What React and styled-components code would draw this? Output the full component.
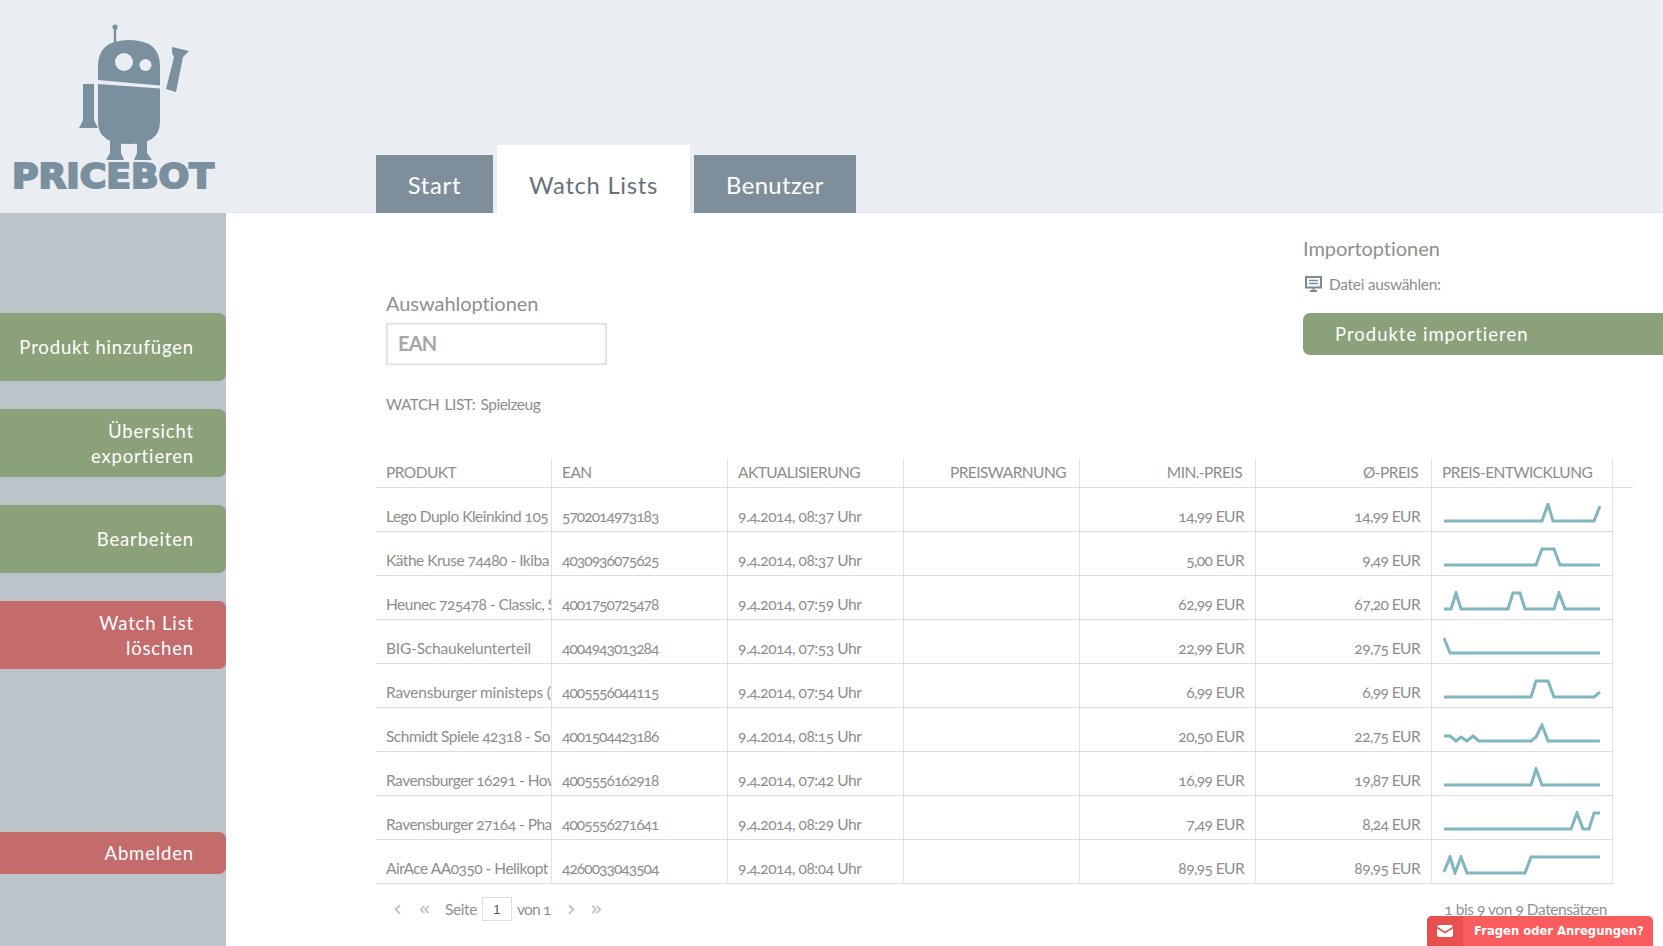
import React from 'react';
import styled, { createGlobalStyle } from 'styled-components';
import { ChevronLeft, ChevronRight, ChevronsLeft, ChevronsRight } from 'lucide-react';

const GlobalStyle = createGlobalStyle`
  html, body { margin: 0; padding: 0; background: #fff; }
  body { font-family: Lato, "Open Sans", sans-serif; color: #8f8c8c; overflow: hidden; }
`;

const Page = styled.div`
  position: relative;
  width: 1663px;
  height: 946px;
  overflow: hidden;
  display: flex;
  flex-direction: column;
`;
const Header = styled.header`
  height: 213px;
  flex: none;
  background: #eaeef2;
  display: flex;
  align-items: flex-end;
`;
const Logo = styled.svg`
  width: 226px;
  height: 213px;
  flex: none;
`;
const Tabs = styled.nav`
  display: flex;
  align-items: flex-end;
  gap: 4px;
  margin-left: 150px;
`;
const Tab = styled.a`
  width: ${p => p.$w}px;
  height: ${p => (p.$active ? 68 : 58)}px;
  box-sizing: border-box;
  display: flex;
  align-items: center;
  justify-content: center;
  padding-top: ${p => (p.$active ? 11 : 1)}px;
  background: ${p => (p.$active ? '#fff' : '#7f8e9b')};
  color: ${p => (p.$active ? '#66727c' : '#fff')};
  font-size: 23.8px;
  letter-spacing: ${p => p.$track || 0.7}px;
`;
const Body = styled.div`
  flex: 1;
  display: flex;
  min-height: 0;
`;
const Sidebar = styled.aside`
  width: 226px;
  flex: none;
  background: #bcc4ca;
  padding-top: 100px;
  box-sizing: border-box;
  display: flex;
  flex-direction: column;
  gap: 28px;
`;
const SideButton = styled.a`
  height: ${p => (p.$short ? 42 : 68)}px;
  margin-top: ${p => (p.$short ? 135 : 0)}px;
  padding: ${p => (p.$two ? 2 : 0)}px 32px 0 0;
  box-sizing: border-box;
  display: flex;
  align-items: center;
  justify-content: flex-end;
  text-align: right;
  border-radius: 0 7px 7px 0;
  background: ${p => (p.$red ? '#c46c6c' : '#8ba17a')};
  color: #fff;
  font-size: 18.5px;
  line-height: 25px;
  letter-spacing: 0.85px;
`;
const Main = styled.main`
  flex: 1;
  padding-left: 150px;
  min-width: 0;
`;
const TopRow = styled.div`
  height: 246px;
  display: flex;
  justify-content: space-between;
`;
const Options = styled.section`
  padding: 78px 0 0 10px;
`;
const Imports = styled.section`
  width: 360px;
  padding-top: 23px;
`;
const Heading = styled.h3`
  margin: 0;
  font-size: 20px;
  line-height: 24px;
  font-weight: 400;
  letter-spacing: -0.05px;
  color: #918e8e;
`;
const SearchInput = styled.input`
  display: block;
  width: 221px;
  height: 42px;
  margin-top: 8px;
  padding: 0 11px 2px;
  box-sizing: border-box;
  border: 1px solid #dedede;
  box-shadow: inset 0 0 3px #cfcfcf;
  font-family: Lato, sans-serif;
  font-size: 20px;
  font-weight: 700;
  letter-spacing: -0.8px;
  color: #a9a5a5;
  outline: none;
  &::placeholder { color: #a9a5a5; opacity: 1; }
`;
const ListName = styled.p`
  margin: 29px 0 0;
  font-size: 15.5px;
  line-height: 20px;
  letter-spacing: -0.5px;
  word-spacing: 2px;
`;
const FileRow = styled.div`
  display: flex;
  align-items: center;
  gap: 7px;
  margin-top: 14px;
  padding-left: 2px;
  font-size: 15.5px;
  line-height: 20px;
  letter-spacing: -0.3px;
`;
const ImportButton = styled.a`
  display: flex;
  align-items: center;
  height: 42px;
  margin-top: 19px;
  padding-left: 32px;
  border-radius: 7px 0 0 7px;
  background: #8ba17a;
  color: #fff;
  font-size: 18.5px;
  letter-spacing: 1px;
`;
const Table = styled.table`
  width: 1255px;
  table-layout: fixed;
  border-collapse: separate;
  border-spacing: 0;
`;
const Th = styled.th`
  width: ${p => p.$w || 176}px;
  height: 29px;
  padding: 0 ${p => (p.$right ? 13 : 10)}px 2px 10px;
  box-sizing: border-box;
  border-bottom: 1px solid #dcdcdc;
  border-right: ${p => (p.$spacer ? 'none' : '1px solid #e2e2e2')};
  font-size: 15.5px;
  font-weight: 400;
  letter-spacing: -0.55px;
  text-align: ${p => (p.$right ? 'right' : 'left')};
  white-space: nowrap;
  color: #8f8c8c;
  vertical-align: middle;
`;
const Td = styled.td`
  height: 44px;
  padding: 0 ${p => (p.$right ? 11 : p.$clip ? 0 : 10)}px 5px 10px;
  box-sizing: border-box;
  border-bottom: 1px solid #dcdcdc;
  border-right: 1px solid #e2e2e2;
  font-size: 15.5px;
  line-height: 20px;
  letter-spacing: ${p => p.$track || -0.45}px;
  text-align: ${p => (p.$right ? 'right' : 'left')};
  white-space: nowrap;
  overflow: hidden;
  vertical-align: bottom;
  font-feature-settings: "onum";
`;
const SparkCell = styled.td`
  height: 44px;
  padding: 0 0 8px 11px;
  box-sizing: border-box;
  border-bottom: 1px solid #dcdcdc;
  border-right: 1px solid #e2e2e2;
  vertical-align: bottom;
`;
const Spark = styled.svg`
  display: block;
  width: 158px;
  height: 20px;
  fill: none;
  stroke: #80b6bf;
  stroke-width: 3;
`;
const Footer = styled.div`
  display: flex;
  align-items: center;
  justify-content: space-between;
  height: 50px;
  padding-right: 56px;
`;
const Pager = styled.div`
  display: flex;
  align-items: center;
  padding-left: 14px;
  font-size: 15.5px;
  color: #939090;
`;
const PagerIcon = styled.span`
  display: flex;
  width: ${p => p.$w}px;
  color: #c0c6cb;
`;
const PageInput = styled.input`
  width: 30px;
  height: 24px;
  margin: 0 5px;
  padding: 0;
  box-sizing: border-box;
  border: 1px solid #dedede;
  text-align: center;
  font-family: "Liberation Sans", sans-serif;
  font-size: 13px;
  color: #555;
`;
const PagerText = styled.span`
  margin-right: ${p => p.$gap || 0}px;
  letter-spacing: ${p => p.$track || -0.4}px;
  font-feature-settings: "onum";
`;
const Count = styled.div`
  font-size: 15.5px;
  letter-spacing: -0.45px;
  font-feature-settings: "onum";
  color: #939090;
`;
const Feedback = styled.a`
  position: absolute;
  left: 1427px;
  bottom: 0;
  width: 226px;
  height: 30px;
  display: flex;
  border-radius: 5px 5px 0 0;
  overflow: hidden;
  background: #f85c5c;
  color: #fff;
  font-family: "DejaVu Sans", sans-serif;
  font-size: 11.6px;
  font-weight: 700;
`;
const FeedbackIcon = styled.span`
  width: 36px;
  background: #e85050;
  display: flex;
  align-items: center;
  justify-content: center;
`;
const FeedbackLabel = styled.span`
  padding-left: 11px;
  line-height: 31px;
  white-space: nowrap;
`;

const rows = [
  ['Lego Duplo Kleinkind 105', '5702014973183', '9.4.2014, 08:37 Uhr', '14,99 EUR', '14,99 EUR', '0,18 98,18 104,1 109,18 150,18 156,3'],
  ['Käthe Kruse 74480 - Ikiba', '4030936075625', '9.4.2014, 08:37 Uhr', '5,00 EUR', '9,49 EUR', '0,18 92,18 98,2 110,2 116,18 156,18'],
  ['Heunec 725478 - Classic, S', '4001750725478', '9.4.2014, 07:59 Uhr', '62,99 EUR', '67,20 EUR', '0,18 7,18 12,2 17,18 64,18 69,2 76,2 81,18 110,18 115,2 121,18 156,18'],
  ['BIG-Schaukelunterteil', '4004943013284', '9.4.2014, 07:53 Uhr', '22,99 EUR', '29,75 EUR', '0,3 6,18 156,18'],
  ['Ravensburger ministeps (', '4005556044115', '9.4.2014, 07:54 Uhr', '6,99 EUR', '6,99 EUR', '0,18 87,18 92,2 104,2 110,18 150,18 156,13'],
  ['Schmidt Spiele 42318 - So', '4001504423186', '9.4.2014, 08:15 Uhr', '20,50 EUR', '22,75 EUR', '0,13 6,13 12,18 17,14 23,18 29,13 35,18 87,18 92,14 98,2 104,18 156,18'],
  ['Ravensburger 16291 - How', '4005556162918', '9.4.2014, 07:42 Uhr', '16,99 EUR', '19,87 EUR', '0,18 87,18 92,2 98,18 156,18'],
  ['Ravensburger 27164 - Pha', '4005556271641', '9.4.2014, 08:29 Uhr', '7,49 EUR', '8,24 EUR', '0,18 127,18 133,2 139,18 145,18 150,2 156,2'],
  ['AirAce AA0350 - Helikopt', '4260033043504', '9.4.2014, 08:04 Uhr', '89,95 EUR', '89,95 EUR', '0,17 6,2 11,18 17,2 23,18 81,18 87,2 156,2'],
];

// names with figures run wider in Lato than in the original font
const nameTrack = name => (/\d/.test(name) ? -0.5 : -0.2);

const RobotLogo = () => (
  <Logo viewBox="0 0 226 213">
    <g fill="#7a909e">
      <circle cx="115" cy="27" r="2.6" />
      <rect x="113.8" y="27" width="2.4" height="17" />
      <path d="M98 80V66Q98 40 129 40Q160 40 160 66V85.500Z" />
      <path d="M98 84L160 88.500V122Q160 144 129 144Q98 144 98 122Z" />
      <path d="M110 140H121V153L124 160H106L110 153Z" />
      <path d="M137 140H147V153L152 160H134L137 153Z" />
      <path d="M83 84H94V120L98 128H79L83 120Z" />
      <path d="M172 47L189 51L183 57L176 92L166 89L174 57L172 53Z" />
      <text x="12" y="188" fontFamily="DejaVu Sans, sans-serif" fontWeight="700" fontSize="33" textLength="202" lengthAdjust="spacingAndGlyphs" stroke="#7a909e" strokeWidth="2">PRICEBOT</text>
    </g>
    <circle cx="124" cy="62" r="9" fill="#eaeef2" />
    <circle cx="145.500" cy="65" r="6" fill="#eaeef2" />
  </Logo>
);

const FileIcon = () => (
  <svg width="17" height="16" viewBox="0 0 17 16" fill="none" stroke="#7a8a96" strokeWidth="2">
    <rect x="1" y="1" width="15" height="10.500" />
    <path d="M4 4.500H13M4 7.500H13" strokeWidth="1.500" />
    <path d="M5 15H12M8.500 12V15" />
  </svg>
);

const MailIcon = () => (
  <svg width="16" height="12" viewBox="0 0 16 12" fill="#fff">
    <path d="M1.500 0H14.500L16 1.500L8 6.500L0 1.500Z" />
    <path d="M0 3.500L8 8.500L16 3.500V10.500L14.500 12H1.500L0 10.500Z" />
  </svg>
);

const App = () => (
  <Page>
    <GlobalStyle />
    <Header>
      <RobotLogo />
      <Tabs>
        <Tab $w={117}>Start</Tab>
        <Tab $w={193} $active>Watch Lists</Tab>
        <Tab $w={162} $track={0.4}>Benutzer</Tab>
      </Tabs>
    </Header>
    <Body>
      <Sidebar>
        <SideButton>Produkt hinzufügen</SideButton>
        <SideButton $two>Übersicht<br />exportieren</SideButton>
        <SideButton>Bearbeiten</SideButton>
        <SideButton $red $two>Watch List<br />löschen</SideButton>
        <SideButton $red $short>Abmelden</SideButton>
      </Sidebar>
      <Main>
        <TopRow>
          <Options>
            <Heading>Auswahloptionen</Heading>
            <SearchInput placeholder="EAN" />
            <ListName>WATCH LIST: Spielzeug</ListName>
          </Options>
          <Imports>
            <Heading>Importoptionen</Heading>
            <FileRow><FileIcon />Datei auswählen:</FileRow>
            <ImportButton>Produkte importieren</ImportButton>
          </Imports>
        </TopRow>
        <Table>
          <thead>
            <tr>
              <Th>PRODUKT</Th>
              <Th>EAN</Th>
              <Th>AKTUALISIERUNG</Th>
              <Th $right>PREISWARNUNG</Th>
              <Th $right>MIN.-PREIS</Th>
              <Th $right>Ø-PREIS</Th>
              <Th $w={181}>PREIS-ENTWICKLUNG</Th>
              <Th $w={18} $spacer />
            </tr>
          </thead>
          <tbody>
            {rows.map(row => (
              <tr key={row[1]}>
                <Td $clip $track={nameTrack(row[0])}>{row[0]}</Td>
                <Td $track={-0.95}>{row[1]}</Td>
                <Td>{row[2]}</Td>
                <Td />
                <Td $right $track={-0.6}>{row[3]}</Td>
                <Td $right $track={-0.6}>{row[4]}</Td>
                <SparkCell>
                  <Spark viewBox="-1 0 158 20"><polyline points={row[5]} /></Spark>
                </SparkCell>
              </tr>
            ))}
          </tbody>
        </Table>
        <Footer>
          <Pager>
            <PagerIcon $w={27}><ChevronLeft size={15} strokeWidth={3} /></PagerIcon>
            <PagerIcon $w={28}><ChevronsLeft size={15} strokeWidth={3} /></PagerIcon>
            <PagerText>Seite</PagerText>
            <PageInput defaultValue="1" />
            <PagerText $gap={13} $track={-0.8}>von 1</PagerText>
            <PagerIcon $w={25}><ChevronRight size={15} strokeWidth={3} /></PagerIcon>
            <PagerIcon $w={25}><ChevronsRight size={15} strokeWidth={3} /></PagerIcon>
          </Pager>
          <Count>1 bis 9 von 9 Datensätzen</Count>
        </Footer>
      </Main>
    </Body>
    <Feedback>
      <FeedbackIcon><MailIcon /></FeedbackIcon>
      <FeedbackLabel>Fragen oder Anregungen?</FeedbackLabel>
    </Feedback>
  </Page>
);

export default App;
